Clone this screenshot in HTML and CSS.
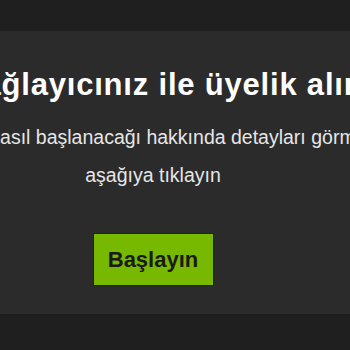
FILE: index.html
```html
<!DOCTYPE html>
<html lang="tr">
<head>
<meta charset="utf-8">
<link rel="stylesheet" href="styles.css">
</head>
<body>
  <div class="top"></div>
  <section class="panel">
    <div class="content">
      <h1 class="title">Sağlayıcınız ile üyelik alın</h1>
      <p class="sub sub1">Nasıl başlanacağı hakkında detayları görmek için</p>
      <p class="sub sub2">aşağıya tıklayın</p>
      <button class="btn">Başlayın</button>
    </div>
  </section>
  <div class="bottom"></div>
</body>
</html>
```
FILE: styles.css
```css
html, body {
  margin: 0;
  padding: 0;
  background: #1f1f1f;
  overflow: hidden;
  width: 350px;
  height: 350px;
}
.top {
  height: 31px;
}
.panel {
  background: #2b2b2b;
  height: 283px;
}
.content {
  width: 306px;
  display: flex;
  flex-direction: column;
  align-items: center;
  font-family: "Liberation Sans", Arial, sans-serif;
}
.title {
  align-self: flex-start;
  margin: 37px 0 0 -38px;
  white-space: nowrap;
  font-size: 31px;
  letter-spacing: 0.8px;
  font-weight: 700;
  color: #ffffff;
  line-height: 34px;
}
.sub {
  margin: 0;
  white-space: nowrap;
  font-size: 19.5px;
  color: #e6e6e6;
  line-height: 22px;
}
.sub1 {
  align-self: flex-start;
  margin: 24px 0 0 -14px;
}
.sub2 {
  margin-top: 16px;
}
.btn {
  margin-top: 47px;
  width: 121px;
  height: 53px;
  background: #76b900;
  border: 1px solid #1d2a05;
  color: #1a1a1a;
  font-family: "Liberation Sans", Arial, sans-serif;
  font-weight: 700;
  font-size: 22px;
  padding: 0;
}
```
